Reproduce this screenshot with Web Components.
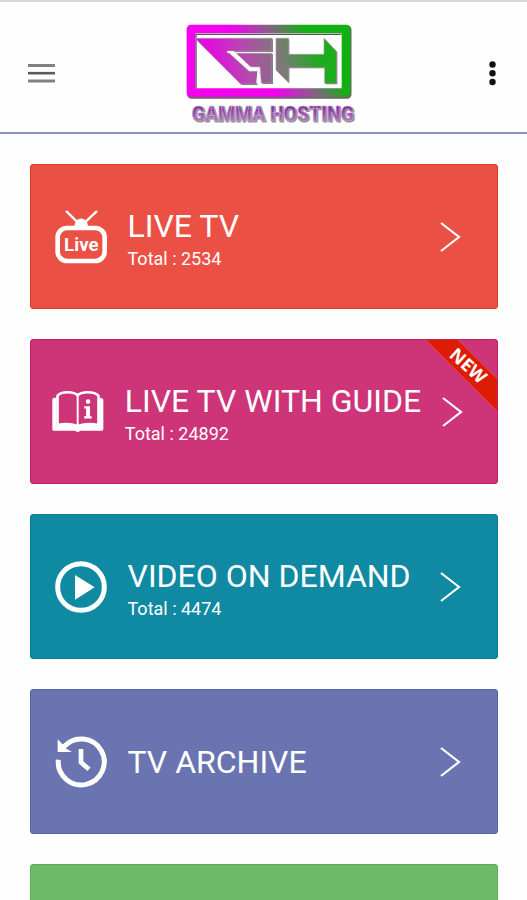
<!DOCTYPE html>
<html lang="en">
<head>
  <meta charset="UTF-8">
  <meta name="viewport" content="width=device-width, initial-scale=1.0">
  <title>Gamma Hosting</title>
  <style>
    body {
      margin: 0;
      background: #fefefe;
      font-family: Roboto, "Liberation Sans", sans-serif;
    }
  </style>
</head>
<body>
  <tv-app>
    <app-header slot="header"></app-header>
    <menu-card color="#eb5044" edge="#de3a28" href="#live">
      <menu-icon slot="icon" name="live"></menu-icon>
      LIVE TV
      <span slot="total">Total : 2534</span>
    </menu-card>
    <menu-card color="#ce3478" edge="#c21c66" href="#guide">
      <menu-icon slot="icon" name="guide"></menu-icon>
      LIVE TV WITH GUIDE
      <span slot="total">Total : 24892</span>
      <new-ribbon slot="ribbon"></new-ribbon>
    </menu-card>
    <menu-card color="#1089a2" edge="#087f98" href="#vod">
      <menu-icon slot="icon" name="play"></menu-icon>
      VIDEO ON DEMAND
      <span slot="total">Total : 4474</span>
    </menu-card>
    <menu-card color="#6a74b1" edge="#5661a6" href="#archive">
      <menu-icon slot="icon" name="archive"></menu-icon>
      TV ARCHIVE
    </menu-card>
    <menu-card color="#6fba68" edge="#5eab56" href="#more"></menu-card>
  </tv-app>

  <script>
    class TvApp extends HTMLElement {
      connectedCallback() {
        this.attachShadow({ mode: 'open' });
        this.shadowRoot.innerHTML = `
          <style>
            :host {
              display: flex;
              flex-direction: column;
              height: 100vh;
            }
            main {
              flex: 1;
              min-height: 0;
              overflow-y: auto;
              scrollbar-width: none;
              display: flex;
              flex-direction: column;
              gap: 30px;
              padding: 30px 29px 30px 30px;
            }
          </style>
          <slot name="header"></slot>
          <main><slot></slot></main>
        `;
      }
    }

    class AppHeader extends HTMLElement {
      connectedCallback() {
        this.attachShadow({ mode: 'open' });
        this.shadowRoot.innerHTML = `
          <style>
            :host {
              display: block;
              border-top: 2px solid #d8d8d8;
              border-bottom: 2px solid #8a92c6;
            }
            header {
              display: flex;
              align-items: center;
              justify-content: space-between;
              padding: 20px 27px 8px 28px;
            }
            button {
              display: flex;
              padding: 0;
              border: 0;
              background: none;
              cursor: pointer;
            }
          </style>
          <header>
            <button aria-label="Menu">
              <svg width="27" height="22" viewBox="0 0 27 22" stroke-width="3">
                <path d="M0 3.5h27M0 19h27" stroke="#808080"/>
                <path d="M0 11.2h27" stroke="#5c5c5c" stroke-width="2.6"/>
              </svg>
            </button>
            <app-logo></app-logo>
            <button aria-label="More options">
              <svg width="15" height="26" viewBox="0 0 15 26" fill="#111">
                <circle cx="7.5" cy="4.5" r="3.2"/>
                <circle cx="7.5" cy="13.2" r="3.2"/>
                <circle cx="7.5" cy="22" r="3.2"/>
              </svg>
            </button>
          </header>
        `;
      }
    }

    class AppLogo extends HTMLElement {
      connectedCallback() {
        this.attachShadow({ mode: 'open' });
        this.shadowRoot.innerHTML = `
          <style>
            :host { display: block; }
            svg { display: block; overflow: visible; }
            text {
              font-family: Roboto, sans-serif;
              font-weight: 900;
              font-size: 58px;
            }
          </style>
          <svg width="168" height="102" viewBox="48 36 504 306" role="img" aria-label="Gamma Hosting">
            <defs>
              <linearGradient id="frame" gradientUnits="userSpaceOnUse" x1="145" y1="0" x2="293" y2="-102">
                <stop offset="0" stop-color="#f400ee"/>
                <stop offset=".5" stop-color="#8c5c8a"/>
                <stop offset="1" stop-color="#12b012"/>
              </linearGradient>
              <linearGradient id="letters" gradientUnits="userSpaceOnUse" x1="140" y1="180" x2="440" y2="120">
                <stop offset="0" stop-color="#e010dc"/>
                <stop offset=".3" stop-color="#b44aae"/>
                <stop offset=".65" stop-color="#7c7a76"/>
                <stop offset="1" stop-color="#1cac1c"/>
              </linearGradient>
              <linearGradient id="word" x1="0" y1="0" x2="0" y2="1">
                <stop offset=".2" stop-color="#8a2aa6"/>
                <stop offset=".6" stop-color="#a75abb"/>
                <stop offset=".9" stop-color="#a79aaa"/>
              </linearGradient>
            </defs>
            <rect x="65" y="59" width="466" height="194" fill="none" stroke="#666" stroke-width="27" stroke-linejoin="round"/>
            <rect x="63" y="57" width="465" height="191" fill="#fefefe" stroke="url(#frame)" stroke-width="26" stroke-linejoin="round"/>
            <path d="M78 234V73H514" fill="none" stroke="#555" stroke-width="4"/>
            <g fill="#777" transform="translate(3 3)">
              <path d="M75 85H306V123H170L237 184H265L259 222H212Z"/>
              <path d="M195 130H306V219H274L270 170H238Z"/>
              <path d="M318 85H355V133H462V85L499 124V220H464V172H355V217L318 180Z"/>
            </g>
            <g fill="url(#letters)" stroke="#a395a5" stroke-width="2">
              <path d="M75 85H306V123H170L237 184H265L259 222H212Z"/>
              <path d="M195 130H306V219H274L270 170H238Z"/>
              <path d="M318 85H355V133H462V85L499 124V220H464V172H355V217L318 180Z"/>
            </g>
            <path d="M172 126H190L242 175H266L262 220" fill="none" stroke="#fefefe" stroke-width="6"/>
            <text x="68" y="335" fill="#777" stroke="#999" stroke-width="3">GAMMA HOSTING</text>
            <text x="65" y="332" fill="url(#word)" stroke="#b9a4c0" stroke-width="2" aria-hidden="true">GAMMA HOSTING</text>
          </svg>
        `;
      }
    }

    const icons = {
      live: `
        <svg viewBox="73 43 156 162">
          <path d="M108 48L138 77M197 48L166 77" stroke="currentColor" stroke-width="7" stroke-linecap="round"/>
          <path d="M131 92a20 23 0 0 1 41 0z" fill="currentColor"/>
          <rect x="81" y="97" width="141" height="99" rx="28" fill="none" stroke="currentColor" stroke-width="14"/>
          <text x="152" y="167" text-anchor="middle" fill="currentColor">Live</text>
        </svg>`,
      guide: `
        <svg viewBox="63 40 160 166">
          <path d="M77 79H69Q64 80 64 86V176Q64 181 70 181H133Q142 188 151 181H215Q221 181 221 175V86Q221 80 208 79V166Q175 158 142 166Q110 158 77 166Z" fill="currentColor"/>
          <path d="M80 163V73Q88 62 111 62Q134 62 142 72Q150 62 173 62Q197 62 206 73V163Q172 156 142 166Q112 156 80 163Z" fill="none" stroke="currentColor" stroke-width="8" stroke-linejoin="round"/>
          <path d="M142 70V166" stroke="currentColor" stroke-width="6"/>
          <circle cx="174" cy="91" r="7" fill="currentColor"/>
          <path d="M162 105H180V136H185V143H162V136H168V112H162Z" fill="currentColor"/>
        </svg>`,
      play: `
        <svg viewBox="73 46 156 162">
          <circle cx="151" cy="127" r="70" fill="none" stroke="currentColor" stroke-width="15"/>
          <path d="M133 91L192 128L133 165Z" fill="currentColor"/>
        </svg>`,
      archive: `
        <svg viewBox="73 46 156 162">
          <path d="M83 120A69 69 0 1 0 100 81" fill="none" stroke="currentColor" stroke-width="15"/>
          <path d="M81 59V97H124L107 87L97 75Z" fill="currentColor"/>
          <path d="M151 88V128L175 149" fill="none" stroke="currentColor" stroke-width="14"/>
        </svg>`
    };

    class MenuIcon extends HTMLElement {
      connectedCallback() {
        this.attachShadow({ mode: 'open' });
        this.shadowRoot.innerHTML = `
          <style>
            :host {
              display: block;
              width: 52px;
              height: 54px;
            }
            svg { display: block; width: 100%; height: 100%; }
            text {
              font-family: Roboto, sans-serif;
              font-weight: bold;
              font-size: 56px;
            }
          </style>
          ${icons[this.getAttribute('name')]}
        `;
      }
    }

    class NewRibbon extends HTMLElement {
      connectedCallback() {
        this.attachShadow({ mode: 'open' });
        this.shadowRoot.innerHTML = `
          <style>
            :host {
              display: block;
              position: absolute;
              top: 0;
              right: 0;
            }
            svg { display: block; }
            text {
              font-family: "Open Sans", sans-serif;
              font-weight: bold;
              font-size: 18px;
            }
          </style>
          <svg width="72" height="72" viewBox="0 0 72 72">
            <path d="M1 0H33L72 39V71Z" fill="#dc1c04"/>
            <path d="M1 0L72 71M33 0L72 39" stroke="#e8402a"/>
            <text transform="translate(43 26) rotate(42)" y="6" text-anchor="middle" fill="#fff">NEW</text>
          </svg>
        `;
      }
    }

    class MenuCard extends HTMLElement {
      connectedCallback() {
        this.attachShadow({ mode: 'open' });
        this.shadowRoot.innerHTML = `
          <style>
            :host {
              display: block;
              flex: none;
              color: #fff;
            }
            a {
              position: relative;
              display: flex;
              align-items: center;
              justify-content: center;
              box-sizing: border-box;
              min-height: 145px;
              border: 1px solid ${this.getAttribute('edge')};
              border-radius: 3px;
              background: ${this.getAttribute('color')};
              color: inherit;
              text-decoration: none;
              overflow: hidden;
            }
            .text {
              min-width: 291px;
              margin: 0 21px;
            }
            .title {
              font-size: 32px;
              line-height: 44px;
            }
            .total {
              font-size: 18px;
              line-height: 22px;
            }
            ::slotted([slot="total"]) { display: block; }
            .chevron { width: 34px; height: 30px; }
          </style>
          <a href="${this.getAttribute('href')}">
            <slot name="icon"></slot>
            <div class="text">
              <div class="title"><slot></slot></div>
              <div class="total"><slot name="total"></slot></div>
            </div>
            ${this.childElementCount ? `
            <svg class="chevron" viewBox="0 0 34 30" fill="none" stroke="#fff" stroke-width="2.2">
              <path d="M1 1L19 15L1 29"/>
            </svg>` : ''}
            <slot name="ribbon"></slot>
          </a>
        `;
      }
    }

    customElements.define('tv-app', TvApp);
    customElements.define('app-header', AppHeader);
    customElements.define('app-logo', AppLogo);
    customElements.define('menu-icon', MenuIcon);
    customElements.define('new-ribbon', NewRibbon);
    customElements.define('menu-card', MenuCard);
  </script>
</body>
</html>
